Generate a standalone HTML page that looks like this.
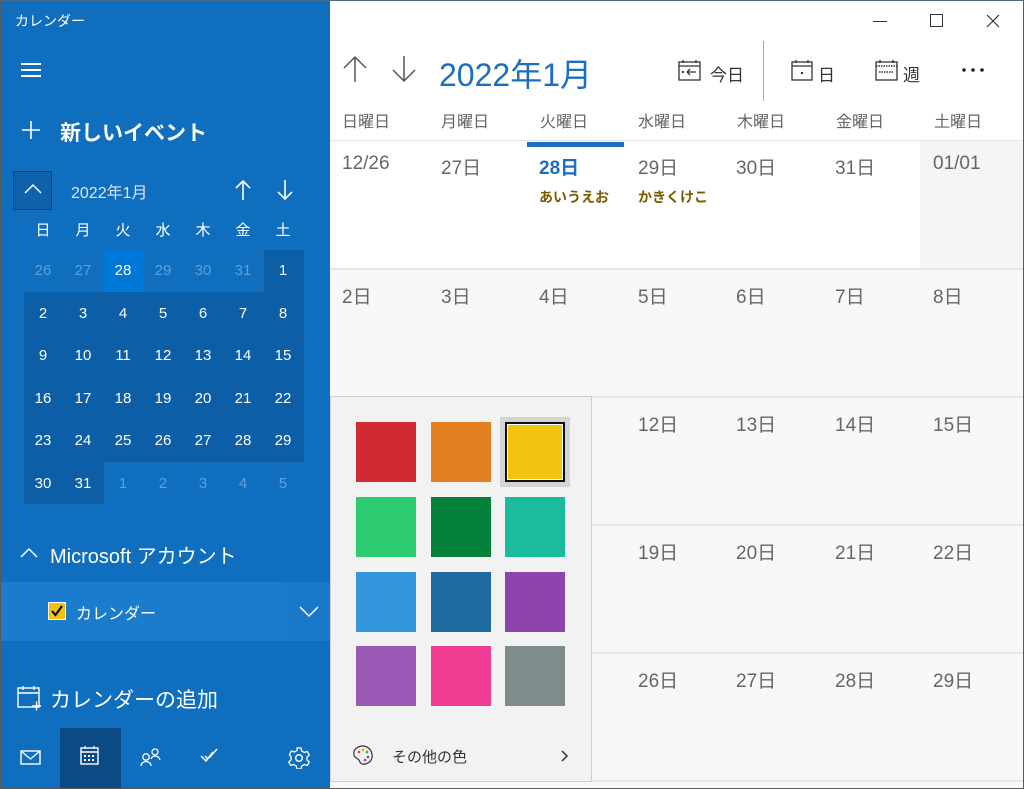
<!DOCTYPE html>
<html><head><meta charset="utf-8"><style>
*{margin:0;padding:0;box-sizing:border-box}
body{width:1024px;height:789px;overflow:hidden;background:#fff;font-family:"Liberation Sans","Noto Sans CJK JP",sans-serif;position:relative}
.a{position:absolute}
.side{left:0;top:0;width:330px;height:789px;background:#106ebe;color:#fff}
.mc{position:absolute;width:40px;height:42px;text-align:center;line-height:42px;font-size:15px}
.wd{font-size:16px;color:#666;top:108px}
.dn{font-size:19px;color:#666}
.sw{position:absolute;width:60px;height:60px}
svg{position:absolute}
</style></head><body>
<div class="a side">
 <div class="a" style="left:15px;top:11px;font-size:14px">カレンダー</div>
 <div class="a" style="left:21px;top:63px;width:20px;height:2px;background:#fff;box-shadow:0 6px 0 #fff,0 12px 0 #fff"></div>
 <svg style="left:21px;top:120px" width="20" height="20"><path d="M10 1 V19 M1 10 H19" stroke="#fff" stroke-width="1.6"/></svg>
 <div class="a" style="left:60px;top:117px;font-size:21px;font-weight:bold">新しいイベント</div>
 <div class="a" style="left:13px;top:171px;width:39px;height:39px;border:1px solid #0a4178;background:#0e62ab"></div>
 <svg style="left:23px;top:183px" width="20" height="12"><path d="M2 10 L10 2 L18 10" stroke="#fff" stroke-width="1.5" fill="none"/></svg>
 <div class="a" style="left:71px;top:179px;font-size:16px;color:#d8e8f6">2022年1月</div>
 <svg style="left:235px;top:179px" width="16" height="22"><path d="M8 21 V2 M1 9 L8 2 L15 9" stroke="#fff" stroke-width="1.6" fill="none"/></svg>
 <svg style="left:277px;top:179px" width="16" height="22"><path d="M8 1 V20 M1 13 L8 20 L15 13" stroke="#fff" stroke-width="1.6" fill="none"/></svg>
 <div class="a" style="left:23px;top:210px;width:280px;height:42px;font-size:16px">
  <span class="mc" style="left:0">日</span><span class="mc" style="left:40px">月</span><span class="mc" style="left:80px">火</span><span class="mc" style="left:120px">水</span><span class="mc" style="left:160px">木</span><span class="mc" style="left:200px">金</span><span class="mc" style="left:240px">土</span>
 </div>
 <div class="a" style="left:264px;top:250px;width:40px;height:42px;background:#0c5ea6"></div>
 <div class="a" style="left:24px;top:292px;width:280px;height:170px;background:#0c5ea6"></div>
 <div class="a" style="left:24px;top:462px;width:80px;height:42px;background:#0c5ea6"></div>
 <div class="a" style="left:104px;top:250px;width:40px;height:42px;background:#0078d7"></div>
 <div class="a" style="left:23px;top:250px;width:284px;height:260px">
  <span class="mc" style="left:0;top:0;color:#5ea0dc">26</span><span class="mc" style="left:40px;top:0;color:#5ea0dc">27</span><span class="mc" style="left:80px;top:0">28</span><span class="mc" style="left:120px;top:0;color:#5ea0dc">29</span><span class="mc" style="left:160px;top:0;color:#5ea0dc">30</span><span class="mc" style="left:200px;top:0;color:#5ea0dc">31</span><span class="mc" style="left:240px;top:0">1</span>
  <span class="mc" style="left:0;top:43px">2</span><span class="mc" style="left:40px;top:43px">3</span><span class="mc" style="left:80px;top:43px">4</span><span class="mc" style="left:120px;top:43px">5</span><span class="mc" style="left:160px;top:43px">6</span><span class="mc" style="left:200px;top:43px">7</span><span class="mc" style="left:240px;top:43px">8</span>
  <span class="mc" style="left:0;top:85px">9</span><span class="mc" style="left:40px;top:85px">10</span><span class="mc" style="left:80px;top:85px">11</span><span class="mc" style="left:120px;top:85px">12</span><span class="mc" style="left:160px;top:85px">13</span><span class="mc" style="left:200px;top:85px">14</span><span class="mc" style="left:240px;top:85px">15</span>
  <span class="mc" style="left:0;top:128px">16</span><span class="mc" style="left:40px;top:128px">17</span><span class="mc" style="left:80px;top:128px">18</span><span class="mc" style="left:120px;top:128px">19</span><span class="mc" style="left:160px;top:128px">20</span><span class="mc" style="left:200px;top:128px">21</span><span class="mc" style="left:240px;top:128px">22</span>
  <span class="mc" style="left:0;top:170px">23</span><span class="mc" style="left:40px;top:170px">24</span><span class="mc" style="left:80px;top:170px">25</span><span class="mc" style="left:120px;top:170px">26</span><span class="mc" style="left:160px;top:170px">27</span><span class="mc" style="left:200px;top:170px">28</span><span class="mc" style="left:240px;top:170px">29</span>
  <span class="mc" style="left:0;top:213px">30</span><span class="mc" style="left:40px;top:213px">31</span><span class="mc" style="left:80px;top:213px;color:#5ea0dc">1</span><span class="mc" style="left:120px;top:213px;color:#5ea0dc">2</span><span class="mc" style="left:160px;top:213px;color:#5ea0dc">3</span><span class="mc" style="left:200px;top:213px;color:#5ea0dc">4</span><span class="mc" style="left:240px;top:213px;color:#5ea0dc">5</span>
 </div>
 <svg style="left:19px;top:547px" width="20" height="12"><path d="M2 10 L10 2 L18 10" stroke="#fff" stroke-width="1.5" fill="none"/></svg>
 <div class="a" style="left:50px;top:540px;font-size:20px">Microsoft アカウント</div>
 <div class="a" style="left:0;top:582px;width:330px;height:59px;background:#1b7bcd"></div>
 <div class="a" style="left:287px;top:582px;width:43px;height:59px;background:#1a78c8"></div>
 <div class="a" style="left:48px;top:602px;width:18px;height:18px;background:#f0c20f;border:1px solid #fff"></div>
 <svg style="left:50px;top:604px" width="14" height="14"><path d="M2 7 L5.5 11 L12 2" stroke="#000" stroke-width="2" fill="none"/></svg>
 <div class="a" style="left:76px;top:600px;font-size:16px">カレンダー</div>
 <svg style="left:298px;top:605px" width="22" height="14"><path d="M2 2 L11 11 L20 2" stroke="#fff" stroke-width="1.5" fill="none"/></svg>
 <svg style="left:17px;top:685px" width="26" height="26"><rect x="1" y="3" width="21" height="19" stroke="#fff" stroke-width="1.4" fill="none"/><path d="M1 8 H22 M6 1 V5 M17 1 V5 M15 21 H24 M19.5 16.5 V25.5" stroke="#fff" stroke-width="1.4"/></svg>
 <div class="a" style="left:50px;top:684px;font-size:21px">カレンダーの追加</div>
 <div class="a" style="left:60px;top:728px;width:61px;height:61px;background:#0b4a84"></div>
 <svg style="left:20px;top:750px" width="22" height="16"><rect x="1" y="1" width="19" height="13" stroke="#fff" stroke-width="1.4" fill="none"/><path d="M1 1 L10.5 9 L20 1" stroke="#fff" stroke-width="1.4" fill="none"/></svg>
 <svg style="left:80px;top:746px" width="20" height="20"><rect x="1" y="2" width="17" height="16" stroke="#fff" stroke-width="1.4" fill="none"/><path d="M1 6 H18 M5 0 V3 M14 0 V3" stroke="#fff" stroke-width="1.4"/><path d="M4 9h2v2h-2zM8 9h2v2h-2zM12 9h2v2h-2zM4 13h2v2h-2zM8 13h2v2h-2zM12 13h2v2h-2z" fill="#fff"/></svg>
 <svg style="left:140px;top:747px" width="22" height="20"><circle cx="6" cy="10" r="3.2" stroke="#fff" stroke-width="1.3" fill="none"/><path d="M1 19 C1 13 11 13 11 19" stroke="#fff" stroke-width="1.3" fill="none"/><circle cx="15" cy="5" r="3" stroke="#fff" stroke-width="1.3" fill="none"/><path d="M11 12 C12 8 19 8 20 13" stroke="#fff" stroke-width="1.3" fill="none"/></svg>
 <svg style="left:199px;top:747px" width="22" height="18"><path d="M2 9 L7 14 L14 5 M6 9 L9 12 M10 11 L18 2" stroke="#fff" stroke-width="1.5" fill="none"/></svg>
 <svg style="left:288px;top:747px" width="22" height="22"><circle cx="11" cy="11" r="3.3" stroke="#fff" stroke-width="1.4" fill="none"/><path d="M9 1h4l.7 3 2.6 1.5 3-1 2 3.5-2.3 2v3l2.3 2-2 3.5-3-1-2.6 1.5-.7 3h-4l-.7-3-2.6-1.5-3 1-2-3.5 2.3-2v-3L1.4 7.5l2-3.5 3 1L9 3.5z" stroke="#fff" stroke-width="1.3" fill="none"/></svg>
</div>
<!-- title bar -->
<div class="a" style="left:873px;top:21px;width:14px;height:1px;background:#333"></div>
<div class="a" style="left:930px;top:14px;width:13px;height:13px;border:1px solid #333"></div>
<svg style="left:986px;top:14px" width="14" height="14"><path d="M1 1 L13 13 M13 1 L1 13" stroke="#333" stroke-width="1.2"/></svg>
<!-- header -->
<svg style="left:342px;top:55px" width="26" height="28"><path d="M13 27 V2 M2 13 L13 2 L24 13" stroke="#555" stroke-width="1.5" fill="none"/></svg>
<svg style="left:391px;top:55px" width="26" height="28"><path d="M13 1 V26 M2 15 L13 26 L24 15" stroke="#555" stroke-width="1.5" fill="none"/></svg>
<div class="a" style="left:439px;top:50px;font-size:32px;color:#1a6fc0">2022年1月</div>
<svg style="left:678px;top:59px" width="26" height="24"><rect x="1" y="3" width="21" height="18" stroke="#333" stroke-width="1.3" fill="none"/><path d="M1 7 H22 M5 1 V4 M18 1 V4 M9 13 H18 M9 13 L12 10 M9 13 L12 16" stroke="#333" stroke-width="1.3" fill="none"/><rect x="4" y="12" width="2" height="2" fill="#333"/></svg>
<div class="a" style="left:710px;top:61px;font-size:17px;color:#333">今日</div>
<div class="a" style="left:763px;top:41px;width:1px;height:60px;background:#aaa"></div>
<svg style="left:791px;top:59px" width="24" height="24"><rect x="1" y="3" width="20" height="18" stroke="#333" stroke-width="1.3" fill="none"/><path d="M1 7 H21 M5 1 V4 M17 1 V4" stroke="#333" stroke-width="1.3"/><rect x="10" y="13" width="2" height="2" fill="#333"/></svg>
<div class="a" style="left:818px;top:61px;font-size:17px;color:#333">日</div>
<svg style="left:875px;top:59px" width="24" height="24"><rect x="1" y="3" width="21" height="18" stroke="#333" stroke-width="1.3" fill="none"/><path d="M1 7 H22 M5 1 V4 M18 1 V4 M4 13 H19" stroke="#333" stroke-width="1.5" stroke-dasharray="1.5 1"/></svg>
<div class="a" style="left:903px;top:61px;font-size:17px;color:#333">週</div>
<svg style="left:960px;top:66px" width="26" height="8"><circle cx="4" cy="4" r="1.8" fill="#222"/><circle cx="13" cy="4" r="1.8" fill="#222"/><circle cx="22" cy="4" r="1.8" fill="#222"/></svg>
<!-- weekday headers -->
<div class="a wd" style="left:342px">日曜日</div><div class="a wd" style="left:441px">月曜日</div><div class="a wd" style="left:540px">火曜日</div><div class="a wd" style="left:638px">水曜日</div><div class="a wd" style="left:737px">木曜日</div><div class="a wd" style="left:836px">金曜日</div><div class="a wd" style="left:934px">土曜日</div>
<div class="a" style="left:330px;top:140px;width:694px;height:1px;background:#e3e3e3"></div>
<div class="a" style="left:920px;top:141px;width:104px;height:127px;background:#f5f5f5"></div>
<div class="a" style="left:527px;top:142px;width:97px;height:5px;background:#1a6fc0"></div>
<div class="a" style="left:330px;top:269px;width:694px;height:520px;background:#f8f8f8"></div>
<div class="a" style="left:330px;top:268px;width:694px;height:2px;background:#e6e6e6"></div>
<div class="a" style="left:330px;top:396px;width:694px;height:2px;background:#e6e6e6"></div>
<div class="a" style="left:330px;top:524px;width:694px;height:2px;background:#e6e6e6"></div>
<div class="a" style="left:330px;top:652px;width:694px;height:2px;background:#e6e6e6"></div>
<div class="a" style="left:330px;top:780px;width:694px;height:2px;background:#e6e6e6"></div>
<div class="a dn" style="left:342px;top:153px">12/26</div><div class="a dn" style="left:441px;top:153px">27日</div><div class="a dn" style="left:539px;top:153px;color:#1a6fc0;font-weight:bold">28日</div><div class="a dn" style="left:638px;top:153px">29日</div><div class="a dn" style="left:736px;top:153px">30日</div><div class="a dn" style="left:835px;top:153px">31日</div><div class="a dn" style="left:933px;top:153px">01/01</div>
<div class="a" style="left:539px;top:187px;font-size:14px;font-weight:bold;color:#7a5c00">あいうえお</div>
<div class="a" style="left:638px;top:187px;font-size:14px;font-weight:bold;color:#7a5c00">かきくけこ</div>
<div class="a dn" style="left:342px;top:282px">2日</div><div class="a dn" style="left:441px;top:282px">3日</div><div class="a dn" style="left:539px;top:282px">4日</div><div class="a dn" style="left:638px;top:282px">5日</div><div class="a dn" style="left:736px;top:282px">6日</div><div class="a dn" style="left:835px;top:282px">7日</div><div class="a dn" style="left:933px;top:282px">8日</div>
<div class="a dn" style="left:638px;top:410px">12日</div><div class="a dn" style="left:736px;top:410px">13日</div><div class="a dn" style="left:835px;top:410px">14日</div><div class="a dn" style="left:933px;top:410px">15日</div>
<div class="a dn" style="left:638px;top:538px">19日</div><div class="a dn" style="left:736px;top:538px">20日</div><div class="a dn" style="left:835px;top:538px">21日</div><div class="a dn" style="left:933px;top:538px">22日</div>
<div class="a dn" style="left:638px;top:666px">26日</div><div class="a dn" style="left:736px;top:666px">27日</div><div class="a dn" style="left:835px;top:666px">28日</div><div class="a dn" style="left:933px;top:666px">29日</div>
<!-- popup -->
<div class="a" style="left:330px;top:396px;width:262px;height:386px;background:#f2f2f2;border:1px solid #cfcfcf"></div>
<div class="a" style="left:500px;top:417px;width:70px;height:70px;background:#d4d4d4"></div>
<div class="sw" style="left:356px;top:422px;background:#d02a35"></div>
<div class="sw" style="left:431px;top:422px;background:#e47f22"></div>
<div class="sw" style="left:505px;top:422px;background:#f0c40f;border:2px solid #111;box-shadow:inset 0 0 0 1px #fff"></div>
<div class="sw" style="left:356px;top:497px;background:#2ecc71"></div>
<div class="sw" style="left:431px;top:497px;background:#04803a"></div>
<div class="sw" style="left:505px;top:497px;background:#1abc9c"></div>
<div class="sw" style="left:356px;top:572px;background:#3597db"></div>
<div class="sw" style="left:431px;top:572px;background:#1f6aa0"></div>
<div class="sw" style="left:505px;top:572px;background:#8e44ad"></div>
<div class="sw" style="left:356px;top:646px;background:#9b59b6"></div>
<div class="sw" style="left:431px;top:646px;background:#ef3c92"></div>
<div class="sw" style="left:505px;top:646px;background:#7f8c8c"></div>
<svg style="left:352px;top:744px" width="22" height="22"><path d="M11 2 C5 2 1 6 2 11 C3 15 6 14 7 16 C8 19 10 21 13 20 C18 19 21 15 20 10 C19 5 15 2 11 2Z" stroke="#333" stroke-width="1.2" fill="none"/><circle cx="7" cy="8" r="1.3" fill="#e33"/><circle cx="11" cy="6" r="1.3" fill="#e90"/><circle cx="15" cy="8" r="1.3" fill="#3a3"/><circle cx="16" cy="13" r="1.3" fill="#36c"/><circle cx="13" cy="16" r="1.3" fill="#a3a"/></svg>
<div class="a" style="left:392px;top:746px;font-size:15px;color:#333">その他の色</div>
<svg style="left:560px;top:749px" width="10" height="14"><path d="M2 2 L7 7 L2 12" stroke="#333" stroke-width="1.5" fill="none"/></svg>
<div class="a" style="left:0;top:0;width:1024px;height:789px;border:1px solid #5a5a5a;border-top-color:#4a6a8a"></div>
</body></html>
